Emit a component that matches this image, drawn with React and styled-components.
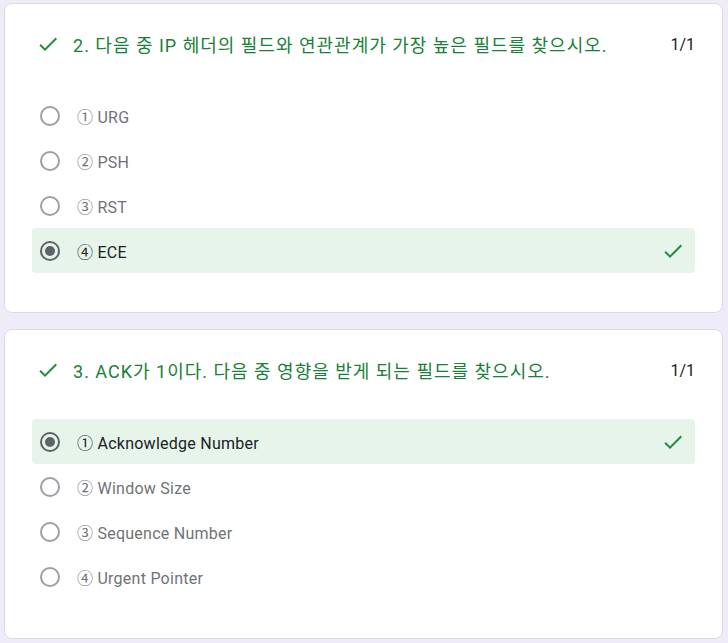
import styled, { createGlobalStyle } from "styled-components";

const GlobalStyle = createGlobalStyle`
  html, body {
    margin: 0;
    padding: 0;
    background: #f0ebf8;
  }
  body {
    font-family: Roboto, "Noto Sans CJK KR", sans-serif;
  }
`;

const questions = [
  {
    no: 2,
    title: "다음 중 IP 헤더의 필드와 연관관계가 가장 높은 필드를 찾으시오.",
    score: "1/1",
    options: ["① URG", "② PSH", "③ RST", "④ ECE"],
    picked: 3,
  },
  {
    no: 3,
    title: "ACK가 1이다. 다음 중 영향을 받게 되는 필드를 찾으시오.",
    score: "1/1",
    options: [
      "① Acknowledge Number",
      "② Window Size",
      "③ Sequence Number",
      "④ Urgent Pointer",
    ],
    picked: 0,
  },
];

function Check({ size = 24 }) {
  return (
    <svg width={size} height={size} viewBox="0 0 24 24" fill="#1e8e3e">
      <path d="M9 16.17L4.83 12l-1.42 1.41L9 19 21 7l-1.41-1.41z" />
    </svg>
  );
}

export default function App() {
  return (
    <Page>
      <GlobalStyle />
      {questions.map((q) => (
        <Card key={q.no}>
          <Header>
            <IconBox>
              <Check />
            </IconBox>
            <Title>
              {q.no}. {q.title}
            </Title>
            <Score>{q.score}</Score>
          </Header>
          <Options>
            {q.options.map((opt, i) => (
              <Option key={opt} $correct={i === q.picked}>
                <Radio $checked={i === q.picked} />
                <Label $checked={i === q.picked}>{opt}</Label>
                {i === q.picked && (
                  <RowCheck>
                    <Check />
                  </RowCheck>
                )}
              </Option>
            ))}
          </Options>
        </Card>
      ))}
    </Page>
  );
}

const Page = styled.div`
  display: flex;
  flex-direction: column;
  gap: 16px;
  padding: 3px 5px 0 4px;
`;

const Card = styled.div`
  background: #ffffff;
  border: 1px solid #dadce0;
  border-radius: 8px;
  padding: 28px 27px 39px 27px;
`;

const Header = styled.div`
  display: flex;
  align-items: center;
  height: 24px;
  margin-bottom: 37px;
`;

const IconBox = styled.div`
  width: 24px;
  height: 24px;
  margin-left: 4px;
  margin-right: 13px;
  display: flex;
`;

const Title = styled.div`
  flex: 1;
  color: #188038;
  font-size: 18px;
  letter-spacing: 1px;
  white-space: nowrap;
`;

const Score = styled.div`
  color: #202124;
  font-size: 16px;
  margin-left: 8px;
`;

const Options = styled.div`
  display: flex;
  flex-direction: column;
`;

const Option = styled.div`
  display: flex;
  align-items: center;
  height: 45px;
  padding: 0 10px 0 8px;
  border-radius: 4px;
  background: ${(p) => (p.$correct ? "#e6f4ea" : "transparent")};
`;

const Radio = styled.div`
  box-sizing: border-box;
  width: 20px;
  height: 20px;
  border-radius: 50%;
  border: 2px solid ${(p) => (p.$checked ? "#5f6368" : "#9aa0a6")};
  display: flex;
  align-items: center;
  justify-content: center;
  flex-shrink: 0;
  &::after {
    content: "";
    display: ${(p) => (p.$checked ? "block" : "none")};
    width: 10px;
    height: 10px;
    border-radius: 50%;
    background: #5f6368;
  }
`;

const Label = styled.div`
  flex: 1;
  margin-left: 17px;
  font-size: 16px;
  letter-spacing: 0.25px;
  color: ${(p) => (p.$checked ? "#202124" : "#6f7378")};
`;

const RowCheck = styled.div`
  display: flex;
  width: 24px;
  height: 24px;
`;
